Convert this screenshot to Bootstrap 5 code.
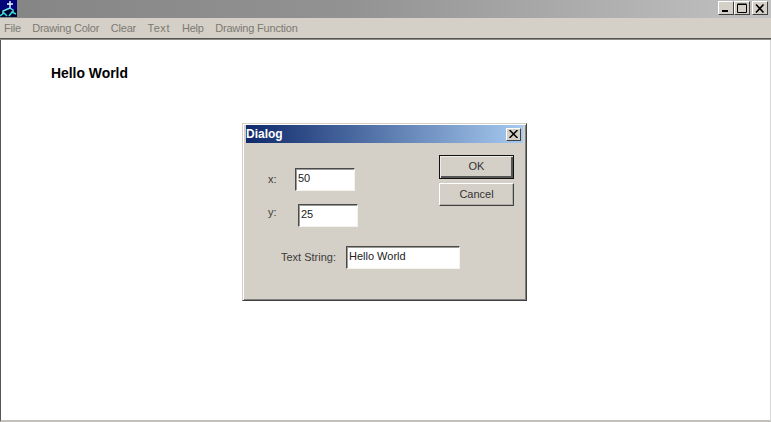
<!DOCTYPE html>
<html lang="en">
<head>
<meta charset="utf-8">
<title>Drawing</title>
<link href="https://cdn.jsdelivr.net/npm/bootstrap@5.3.0/dist/css/bootstrap.min.css" rel="stylesheet">
<style>
html,body{height:422px;overflow:hidden}
body{background:#fff;font-family:"Liberation Sans",Arial,sans-serif;font-size:11px;color:#3a3a36;position:relative}
.app-title{height:18px;background:linear-gradient(90deg,#858585 0,#929292 45%,#c2c2c2 100%)}
.app-icon{width:17px;height:17px;display:block}
.win-btns{gap:0;padding:1px 3px 0 0}
.win-btn{width:16px;height:14px;background:#d4d0c8;border:1px solid;border-color:#fff #404040 #404040 #fff;display:flex;align-items:center;justify-content:center;padding:0}
.win-btn.gap-left{margin-left:2px}
.app-menu{height:20px;background:#d4d0c8;padding-left:4px;gap:11.5px;color:#7c7971;font-size:11px;letter-spacing:-.2px;line-height:20px}
.menu-file{margin-right:-.3px}
.menu-text{letter-spacing:.6px;margin-right:.3px}
.app-rule{height:2px;background:#55534e;border-bottom:1px solid #8e8c86}
.app-canvas{height:382px;background:#fff;border-left:1px solid #555;border-right:1px solid #d8d8d8;border-bottom:2px solid #c2c0ba;padding:25px 0 0 50px;position:relative}
.hello{font-weight:700;font-size:13.9px;color:#000;line-height:17px}
.dlg{position:absolute;left:242px;top:123px;width:285px;height:178px;background:#d4d0c8;border:1px solid;border-color:#d4d0c8 #404040 #404040 #d4d0c8;box-shadow:inset 1px 1px 0 #fff,inset -1px -1px 0 #808080;padding:1px 3px 0 3px}
.dlg-title{height:18px;background:linear-gradient(90deg,#0f2a6c 0,#a6caf0 100%);color:#fff;font-weight:700;font-size:12px;line-height:18px;padding:0 2px 0 0}
.dlg-close{width:15px;height:13px;background:#d4d0c8;border:1px solid;border-color:#fff #404040 #404040 #fff;padding:0;display:flex;align-items:center;justify-content:center}
.dlg-body{color:#3c3c38;font-size:11px}
.dlg-left{width:193px;padding-top:25px;flex:none}
.dlg-right{padding:12px 0 0 0}
.f-row{display:flex;align-items:center;height:23px;white-space:nowrap}
.f-row>*{flex:none}
.f-x{padding-left:22px}
.f-y{padding-left:22px;margin-top:13px}
.f-t{padding-left:35px;margin-top:19px}
.f-lab-x{width:27px}
.f-lab-y{width:30px;position:relative;top:-3px}
.f-lab-t{width:65px}
.f-in{height:23px;background:#fff;border:1px solid;border-color:#4a4a4a #f4f3ee #f4f3ee #4a4a4a;box-shadow:inset 1px 1px 0 #9a9a96;padding:0 2px 3px 2px;font-size:11px;line-height:18px;color:#222;font-family:inherit;border-radius:0;outline:0}
.f-in-sm{width:60px}
.f-in-lg{width:114px}
.dlg-btn{width:75px;font-size:11px;padding:0;background:#d4d0c8;color:#333;border:1px solid;border-color:#fff #404040 #404040 #fff;border-radius:0;display:flex;align-items:center;justify-content:center;font-family:inherit}
.dlg-btn-ok{height:24px;border:1px solid #111;box-shadow:inset 1px 1px 0 #eeece6,inset -2px -2px 0 #555;padding-bottom:2px}
.dlg-btn-cancel{height:23px;margin-top:4px;box-shadow:inset -1px -1px 0 #b0aea8}
</style>
</head>
<body>
<div class="app-title d-flex justify-content-between align-items-start">
  <svg class="app-icon" viewBox="0 0 17 17" aria-hidden="true">
    <rect width="17" height="17" fill="#04047a"/>
    <rect y="10" width="17" height="7" fill="#02022e"/>
    <path d="M10 1V8M7 4H13" stroke="#e8ffff" stroke-width="1.400" fill="none"/>
    <path d="M10 8L3 11V14M10 8L13 10V13" stroke="#6fe8e0" stroke-width="1.400" fill="none"/>
    <path d="M0 16L4 13L7 16M9 16L12 12L16 14" stroke="#3dd" stroke-width="1.500" fill="none"/>
  </svg>
  <div class="d-flex win-btns">
    <button class="win-btn" aria-label="Minimize"><svg width="10" height="10" viewBox="0 0 10 10"><rect x="1" y="7" width="6" height="2" fill="#000"/></svg></button>
    <button class="win-btn" aria-label="Maximize"><svg width="10" height="10" viewBox="0 0 10 10"><path d="M.500 1.500H9.500V9.500H.500Z M.500 1H9.500" fill="none" stroke="#000"/></svg></button>
    <button class="win-btn gap-left" aria-label="Close"><svg width="10" height="9" viewBox="0 0 10 9"><path d="M1 0.500L8.500 8.500M8.500 0.500L1 8.500" stroke="#000" stroke-width="1.600"/></svg></button>
  </div>
</div>
<nav class="app-menu d-flex">
  <span class="menu-file">File</span><span>Drawing Color</span><span>Clear</span><span class="menu-text">Text</span><span>Help</span><span>Drawing Function</span>
</nav>
<div class="app-rule"></div>
<main class="app-canvas">
  <div class="hello">Hello World</div>
</main>
<div class="dlg" role="dialog">
  <div class="dlg-title d-flex justify-content-between align-items-center">
    <span>Dialog</span>
    <button class="dlg-close" aria-label="Close"><svg width="9" height="8" viewBox="0 0 9 8"><path d="M.500 0L8.500 8M8.500 0L.500 8" stroke="#000" stroke-width="1.500"/></svg></button>
  </div>
  <div class="dlg-body d-flex">
    <div class="dlg-left">
      <div class="f-row f-x"><span class="f-lab-x">x:</span><input class="f-in f-in-sm" value="50"></div>
      <div class="f-row f-y"><span class="f-lab-y">y:</span><input class="f-in f-in-sm" value="25"></div>
      <div class="f-row f-t"><span class="f-lab-t">Text String:</span><input class="f-in f-in-lg" value="Hello World"></div>
    </div>
    <div class="dlg-right">
      <button class="dlg-btn dlg-btn-ok">OK</button>
      <button class="dlg-btn dlg-btn-cancel">Cancel</button>
    </div>
  </div>
</div>
<script src="https://cdn.jsdelivr.net/npm/bootstrap@5.3.0/dist/js/bootstrap.bundle.min.js"></script>
</body>
</html>
